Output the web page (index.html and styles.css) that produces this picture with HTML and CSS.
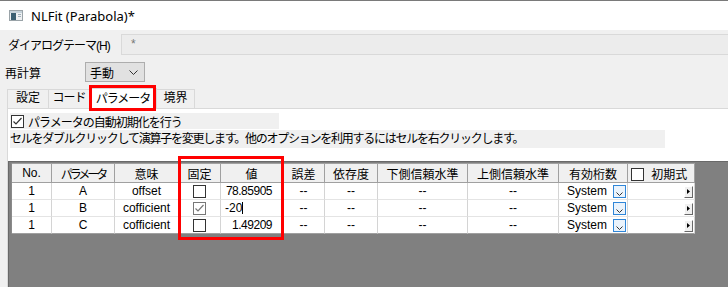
FILE: index.html
```html
<!DOCTYPE html>
<html>
<head>
  <meta charset="utf-8">
  <title>NLFit (Parabola)*</title>
  <link rel="stylesheet" href="styles.css">
</head>
<body>

  <div class="titlebar">
    <svg class="app-icon" width="14" height="11" viewBox="0 0 14 11">
      <rect x="0.5" y="0.5" width="13" height="10" fill="#eef0f2" stroke="#9aa3a8"/>
      <rect x="1" y="1" width="12" height="2" fill="#c6d2da"/>
      <rect x="2" y="3" width="5" height="7" fill="#3b5f72"/>
      <rect x="9" y="4" width="3" height="1" fill="#9fb0ba"/>
      <rect x="9" y="6" width="3" height="1" fill="#9fb0ba"/>
    </svg>
    <span>NLFit (Parabola)*</span>
  </div>

  <div class="dialog">
    <div class="theme-row">
      <span class="theme-label">ダイアログテーマ(H)</span>
      <div class="theme-field">*</div>
    </div>

    <div class="recalc-row">
      <span class="recalc-label">再計算</span>
      <div class="combo">
        <span>手動</span>
        <svg width="9" height="5" viewBox="0 0 9 5"><polyline points="0.5,0.5 4.5,4.5 8.5,0.5" fill="none" stroke="#333"/></svg>
      </div>
    </div>

    <div class="tabs">
      <div class="tab tab-setup">設定</div>
      <div class="tab tab-code">コード</div>
      <div class="tab tab-params active">パラメータ</div>
      <div class="tab tab-bounds">境界</div>
    </div>

    <div class="panel">
      <div class="auto-init">
        <svg class="checkbox" width="13" height="13" viewBox="0 0 13 13">
          <rect x="0.5" y="0.5" width="12" height="12" fill="#fff" stroke="#333"/>
          <polyline points="2.5,6.5 5,9 10.5,3" fill="none" stroke="#333" stroke-width="1.2"/>
        </svg>
        <span class="kana">パラメータの自動初期化を行う</span>
      </div>
      <div class="hint"><span class="kana">セルをダブルクリックして演算子を変更します。他のオプションを利用するにはセルを右クリックします。</span></div>

      <div class="grid-area">
        <table class="grid">
          <colgroup>
            <col style="width:40px"><col style="width:63px"><col style="width:64px"><col style="width:42px">
            <col style="width:62px"><col style="width:42px"><col style="width:53px"><col style="width:90px">
            <col style="width:91px"><col style="width:69px"><col style="width:67px">
          </colgroup>
          <thead>
            <tr>
              <th>No.</th>
              <th><span class="squeeze">パラメータ</span></th>
              <th>意味</th>
              <th>固定</th>
              <th>値</th>
              <th>誤差</th>
              <th>依存度</th>
              <th>下側信頼水準</th>
              <th>上側信頼水準</th>
              <th>有効桁数</th>
              <th class="init-head">
                <svg width="13" height="13" viewBox="0 0 13 13"><rect x="0.5" y="0.5" width="12" height="12" fill="#fff" stroke="#333"/></svg>
                <span>初期式</span>
              </th>
            </tr>
          </thead>
          <tbody>
            <tr>
              <td>1</td><td>A</td><td>offset</td>
              <td><svg class="cell-box" width="13" height="13" viewBox="0 0 13 13"><rect x="0.5" y="0.5" width="12" height="12" fill="#fff" stroke="#333"/></svg></td>
              <td class="num">78.85905</td>
              <td>--</td><td>--</td><td>--</td><td>--</td>
              <td><div class="digits">System<span class="drop"><svg width="7" height="4" viewBox="0 0 7 4"><polyline points="0.5,0.5 3.5,3.5 6.5,0.5" fill="none" stroke="#333"/></svg></span></div></td>
              <td class="more-cell"><span class="more"><svg width="3" height="5" viewBox="0 0 3 5"><polygon points="0,0 3,2.5 0,5" fill="#000"/></svg></span></td>
            </tr>
            <tr>
              <td>1</td><td>B</td><td>cofficient</td>
              <td><svg class="cell-box" width="13" height="13" viewBox="0 0 13 13"><rect x="0.5" y="0.5" width="12" height="12" fill="#fff" stroke="#777"/><polyline points="2.5,6.5 5,9 10.5,3" fill="none" stroke="#777" stroke-width="1.2"/></svg></td>
              <td class="editing">-20<span class="caret"></span></td>
              <td>--</td><td>--</td><td>--</td><td>--</td>
              <td><div class="digits">System<span class="drop"><svg width="7" height="4" viewBox="0 0 7 4"><polyline points="0.5,0.5 3.5,3.5 6.5,0.5" fill="none" stroke="#333"/></svg></span></div></td>
              <td class="more-cell"><span class="more"><svg width="3" height="5" viewBox="0 0 3 5"><polygon points="0,0 3,2.5 0,5" fill="#000"/></svg></span></td>
            </tr>
            <tr>
              <td>1</td><td>C</td><td>cofficient</td>
              <td><svg class="cell-box" width="13" height="13" viewBox="0 0 13 13"><rect x="0.5" y="0.5" width="12" height="12" fill="#fff" stroke="#333"/></svg></td>
              <td class="num">1.49209</td>
              <td>--</td><td>--</td><td>--</td><td>--</td>
              <td><div class="digits">System<span class="drop"><svg width="7" height="4" viewBox="0 0 7 4"><polyline points="0.5,0.5 3.5,3.5 6.5,0.5" fill="none" stroke="#333"/></svg></span></div></td>
              <td class="more-cell"><span class="more"><svg width="3" height="5" viewBox="0 0 3 5"><polygon points="0,0 3,2.5 0,5" fill="#000"/></svg></span></td>
            </tr>
          </tbody>
        </table>
        <div class="highlight"></div>
      </div>
    </div>
  </div>

</body>
</html>
```

FILE: styles.css
```css
body {
  margin: 0;
  width: 728px;
  height: 287px;
  overflow: hidden;
  background: #f0f0f0;
  font-family: 'Liberation Sans', 'Noto Sans CJK JP', sans-serif;
  font-size: 12px;
  color: #000;
}

.titlebar {
  height: 29px;
  border-top: 1px solid #7a7a7a;
  background: #fff;
  display: flex;
  align-items: center;
  gap: 8px;
  padding-left: 9px;
  font-family: 'Noto Sans', sans-serif;
  font-size: 13px;
}

.theme-row {
  display: flex;
  align-items: center;
  height: 21px;
  margin-top: 4px;
}

.theme-label {
  width: 113px;
  padding-left: 8px;
  letter-spacing: -1px;
}

.theme-field {
  flex: 1;
  height: 19px;
  line-height: 19px;
  border: 1px solid #d9d9d9;
  border-right: none;
  background: #ececec;
  padding-left: 9px;
  color: #777;
}

.recalc-row {
  display: flex;
  align-items: center;
  height: 20px;
  margin-top: 7px;
}

.recalc-label {
  width: 80px;
  padding-left: 5px;
}

.combo {
  width: 48px;
  height: 18px;
  border: 1px solid #adadad;
  background: #e1e1e1;
  display: flex;
  align-items: center;
  justify-content: space-between;
  padding: 0 6px 0 4px;
}

.tabs {
  display: flex;
  align-items: flex-end;
  height: 19px;
  margin-top: 7px;
  padding-left: 7px;
}

.tab {
  box-sizing: border-box;
  height: 19px;
  line-height: 17px;
  border: 1px solid #d9d9d9;
  border-bottom: none;
  border-left: none;
  text-align: center;
  background: #f0f0f0;
}

.tab-setup { width: 42px; border-left: 1px solid #d9d9d9; }
.tab-code { width: 41px; letter-spacing: -1px; }
.tab-bounds { width: 38px; }

.tab.active {
  position: relative;
  width: 67px;
  height: 21px;
  line-height: 20px;
  background: #fff;
  margin-bottom: -1px;
  letter-spacing: -1px;
  z-index: 1;
}

.tab.active::after {
  content: '';
  position: absolute;
  left: -1px;
  right: 0;
  top: -4px;
  bottom: -2px;
  border: 3px solid #ff0000;
}

.panel {
  margin-left: 7px;
  border-left: 1px solid #d9d9d9;
  border-top: 1px solid #d9d9d9;
  background: #fff;
}

.kana {
  letter-spacing: -1px;
}

.auto-init {
  display: flex;
  align-items: center;
  gap: 4px;
  width: 268px;
  height: 16px;
  margin: 4px 0 0 2px;
  padding-left: 1px;
  background: #f0f0f0;
}

.hint {
  width: 655px;
  height: 18px;
  line-height: 18px;
  margin: 1px 0 0 2px;
  background: #f0f0f0;
}

.hint .kana {
  letter-spacing: -1.25px;
}

.grid-area {
  position: relative;
  margin-top: 13px;
  height: 124px;
  background: #808080;
  border-top: 1px solid #696969;
  border-left: 1px solid #696969;
  padding: 1px 0 0 2px;
}

.grid {
  table-layout: fixed;
  border-collapse: separate;
  border-spacing: 0;
  width: 683px;
  background: #fff;
  border-left: 1px solid #8a8a8a;
}

.grid th,
.grid td {
  box-sizing: border-box;
  padding: 0;
  text-align: center;
  white-space: nowrap;
  overflow: hidden;
}

.grid th {
  height: 20px;
  background: #f0f0f0;
  font-weight: normal;
  border-right: 1px solid #a0a0a0;
  border-bottom: 1px solid #a0a0a0;
  border-top: 1px solid #a0a0a0;
}

.grid td {
  height: 17px;
  border-right: 1px solid #d4d4d4;
  border-bottom: 1px solid #e4e4e4;
}

.grid tr:last-child td {
  border-bottom: 1px solid #a0a0a0;
}

.squeeze {
  letter-spacing: -3px;
}

.grid th.init-head {
  text-align: left;
  padding-left: 3px;
}

.init-head svg {
  vertical-align: -2px;
  margin-right: 4px;
}

.cell-box {
  display: block;
  margin: 0 auto;
}

.grid td.num {
  text-align: right;
  padding-right: 10px;
  letter-spacing: -0.5px;
}

.grid td.editing {
  text-align: left;
  padding-left: 4px;
}

.caret {
  display: inline-block;
  width: 1px;
  height: 12px;
  background: #000;
  vertical-align: -2px;
}

.digits {
  display: flex;
  align-items: center;
  padding-left: 8px;
  padding-right: 1px;
}

.drop {
  margin-left: auto;
  width: 13px;
  height: 13px;
  border: 1px solid #2f86d8;
  background: #eaf3fc;
  display: flex;
  align-items: flex-end;
  justify-content: center;
  padding-bottom: 1px;
  box-sizing: border-box;
}

.grid td.more-cell {
  text-align: right;
  padding-right: 1px;
}

.more {
  display: inline-flex;
  align-items: center;
  justify-content: center;
  box-sizing: border-box;
  width: 9px;
  height: 12px;
  vertical-align: middle;
  background: #f0f0f0;
  border-top: 1px solid #fff;
  border-left: 1px solid #fff;
  border-right: 1px solid #696969;
  border-bottom: 1px solid #696969;
}

.highlight {
  position: absolute;
  left: 169px;
  top: -6px;
  width: 106px;
  height: 84px;
  box-sizing: border-box;
  border: 3px solid #ff0000;
}
```
